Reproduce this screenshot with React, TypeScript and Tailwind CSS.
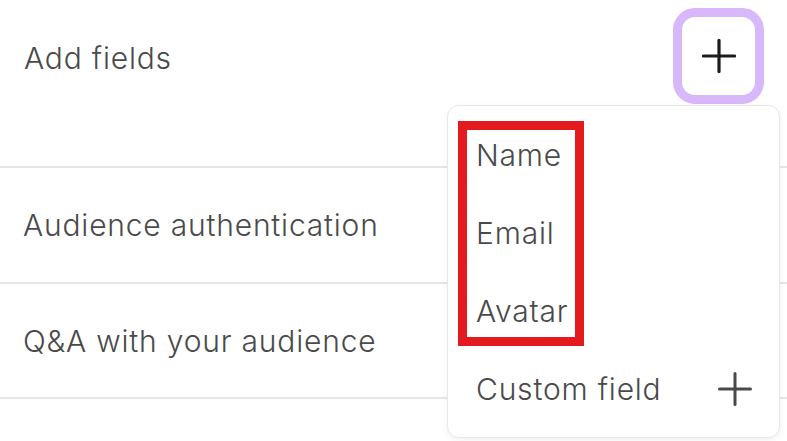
import React from "react";

function PlusIcon({ size, stroke, color }: { size: number; stroke: number; color: string }) {
  return (
    <svg width={size} height={size} viewBox={`0 0 ${size} ${size}`} fill="none">
      <line x1={size / 2} y1={1.5} x2={size / 2} y2={size - 1.5} stroke={color} strokeWidth={stroke} strokeLinecap="round" />
      <line x1={1.5} y1={size / 2} x2={size - 1.5} y2={size / 2} stroke={color} strokeWidth={stroke} strokeLinecap="round" />
    </svg>
  );
}

export default function App() {
  return (
    <div
      className="relative w-[787px] h-[441px] overflow-hidden bg-white text-[#4a4a4a] font-light"
      style={{ fontFamily: "Inter, 'Noto Sans', sans-serif" }}
    >
      <div className="flex h-[168px] items-start justify-between border-b-2 border-[#e6e6e6] pl-[24px] pr-[23px] pt-[8px]">
        <div className="mt-[32px] text-[30px] leading-[36px] tracking-[0.8px]">Add fields</div>
        <button className="flex h-[96px] w-[91px] items-center justify-center rounded-[22px] border-[9px] border-[#d6b8fb] bg-white">
          <PlusIcon size={34} stroke={3.2} color="#1c1c1c" />
        </button>
      </div>
      <div className="flex h-[116px] items-center border-b-2 border-[#e6e6e6] pl-[23px]">
        <div className="text-[30px] leading-[36px] tracking-[0.8px]">Audience authentication</div>
      </div>
      <div className="flex h-[115px] items-center border-b-2 border-[#e6e6e6] pl-[23px]">
        <div className="text-[30px] leading-[36px] tracking-[0.8px]">Q&amp;A with your audience</div>
      </div>

      <div className="absolute left-[447px] top-[105px] h-[333px] w-[333px] rounded-[12px] border border-[#e8e8e8] bg-white shadow-[0_2px_6px_rgba(0,0,0,0.06)]">
        <div className="flex flex-col pt-[10px] pl-[28px] pr-[27px]">
          <div className="flex h-[78px] items-center text-[30px] tracking-[0.8px]">Name</div>
          <div className="flex h-[78px] items-center text-[30px] tracking-[0.8px]">Email</div>
          <div className="flex h-[78px] items-center text-[30px] tracking-[0.8px]">Avatar</div>
          <div className="flex h-[78px] items-center justify-between text-[30px] tracking-[0.8px]">
            <span>Custom field</span>
            <PlusIcon size={34} stroke={3} color="#4a4a4a" />
          </div>
        </div>
        <div className="absolute left-[10px] top-[15px] h-[225px] w-[126px] border-[9px] border-[#e41b1e]" />
      </div>
    </div>
  );
}
